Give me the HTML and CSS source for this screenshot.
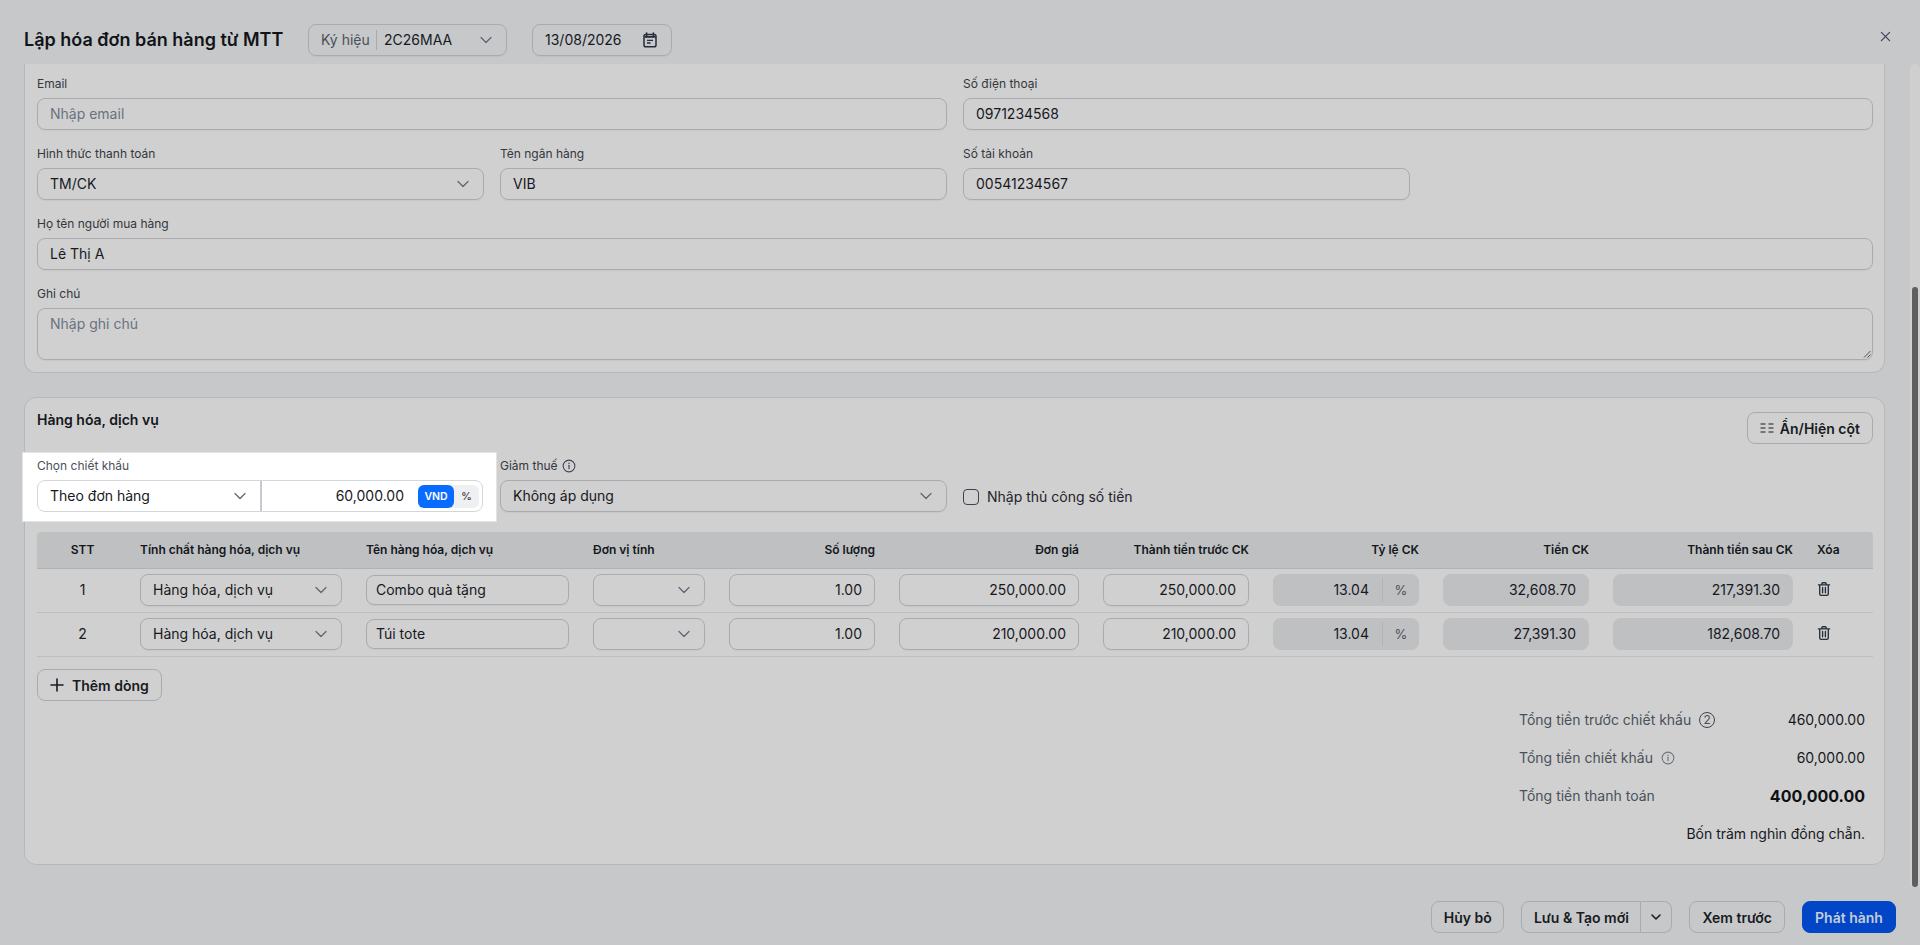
FILE: index.html
```html
<!DOCTYPE html>
<html lang="vi">
<head>
  <meta charset="UTF-8">
  <meta name="viewport" content="width=device-width, initial-scale=1.0">
  <title>Lập hóa đơn bán hàng từ MTT</title>
  <link rel="stylesheet" href="styles.css">
</head>
<body>
  <svg class="sprite" xmlns="http://www.w3.org/2000/svg">
    <symbol id="chev" viewBox="0 0 16 16"><path d="M3 5.5l5 5 5-5" fill="none" stroke="currentColor" stroke-width="1.2" stroke-linecap="round" stroke-linejoin="round"/></symbol>
    <symbol id="info" viewBox="0 0 16 16"><circle cx="8" cy="8" r="6.7" fill="none" stroke="currentColor" stroke-width="1.2"/><path d="M8 7.2v4" stroke="currentColor" stroke-width="1.3" stroke-linecap="round"/><circle cx="8" cy="4.9" r=".85" fill="currentColor"/></symbol>
    <symbol id="trash" viewBox="0 0 16 16"><path d="M3.7 4.2v8.6c0 .9.6 1.5 1.5 1.5h5.6c.9 0 1.5-.6 1.5-1.5V4.2M2.4 3.8h11.2M5.8 3.6V2.7c0-.6.4-1 1-1h2.4c.6 0 1 .4 1 1v.9M6.6 6.4v5.4M9.4 6.4v5.4" fill="none" stroke="currentColor" stroke-width="1.35" stroke-linecap="round"/></symbol>
  </svg>

  <header class="top">
    <h1>Lập hóa đơn bán hàng từ MTT</h1>
    <div class="box symbol-box">
      <span class="symbol-label">Ký hiệu</span>
      <span class="symbol-value">2C26MAA</span>
      <svg class="chev"><use href="#chev"/></svg>
    </div>
    <div class="box date-box">
      <span>13/08/2026</span>
      <svg class="cal" viewBox="0 0 16 16"><path d="M4.6 1v2.4M11.4 1v2.4" stroke="currentColor" stroke-width="1.6" stroke-linecap="round"/><rect x="2" y="2.4" width="12" height="12.4" rx="1.8" fill="none" stroke="currentColor" stroke-width="1.5"/><path d="M2.4 4h11.2v1.8H2.4z" fill="currentColor"/><path d="M5 8.3h6M5 11h3.6" stroke="currentColor" stroke-width="1.3"/></svg>
    </div>
    <button class="close" type="button" aria-label="Đóng">
      <svg viewBox="0 0 12 12"><path d="M1.5 1.5l9 9M10.5 1.5l-9 9" stroke="currentColor" stroke-width="1.3" stroke-linecap="round"/></svg>
    </button>
  </header>

  <div class="middle">
    <main class="content">
      <section class="card card-info">
        <div class="form-grid">
          <div class="field span-2"><label>Email</label><div class="box input placeholder">Nhập email</div></div>
          <div class="field span-2"><label>Số điện thoại</label><div class="box input">0971234568</div></div>
          <div class="field"><label>Hình thức thanh toán</label><div class="box input select">TM/CK<svg class="chev"><use href="#chev"/></svg></div></div>
          <div class="field"><label>Tên ngân hàng</label><div class="box input">VIB</div></div>
          <div class="field"><label>Số tài khoản</label><div class="box input">00541234567</div></div>
          <div class="field span-4"><label>Họ tên người mua hàng</label><div class="box input">Lê Thị A</div></div>
          <div class="field span-4"><label>Ghi chú</label>
            <div class="box textarea placeholder">Nhập ghi chú
              <svg class="grip" viewBox="0 0 8 8"><path d="M7.5 1L1 7.5M7.5 4.5L4.5 7.5" stroke="#4d4f53" stroke-width="1"/></svg>
            </div>
          </div>
        </div>
      </section>

      <section class="card card-goods">
        <div class="goods-head">
          <h2>Hàng hóa, dịch vụ</h2>
          <button class="btn" type="button">
            <svg class="icon-14" viewBox="0 0 14 14"><path d="M.5 3h5M.5 7h5M.5 11h5M8.5 3h5M8.5 7h5M8.5 11h5" stroke="currentColor" stroke-width="1.1"/></svg>
            Ẩn/Hiện cột
          </button>
        </div>

        <div class="discount-row">
          <div class="discount">
            <label>Chọn chiết khấu</label>
            <div class="discount-group">
              <div class="discount-select">Theo đơn hàng<svg class="chev"><use href="#chev"/></svg></div>
              <div class="discount-amount">60,000.00</div>
              <div class="unit-toggle"><span class="unit unit-on">VND</span><span class="unit">%</span></div>
            </div>
          </div>
          <div class="field tax">
            <label>Giảm thuế <svg class="icon-14 info-dark"><use href="#info"/></svg></label>
            <div class="box input select">Không áp dụng<svg class="chev"><use href="#chev"/></svg></div>
          </div>
          <label class="manual"><span class="checkbox"></span>Nhập thủ công số tiền</label>
        </div>

        <table class="lines">
          <colgroup>
            <col class="c-stt"><col class="c-kind"><col class="c-name"><col class="c-unit"><col class="c-qty"><col class="c-price">
            <col class="c-amount"><col class="c-rate"><col class="c-disc"><col class="c-after"><col class="c-del">
          </colgroup>
          <thead>
            <tr>
              <th class="center">STT</th>
              <th>Tính chất hàng hóa, dịch vụ</th>
              <th>Tên hàng hóa, dịch vụ</th>
              <th>Đơn vị tính</th>
              <th class="right">Số lượng</th>
              <th class="right">Đơn giá</th>
              <th class="right">Thành tiền trước CK</th>
              <th class="right">Tỷ lệ CK</th>
              <th class="right">Tiền CK</th>
              <th class="right">Thành tiền sau CK</th>
              <th>Xóa</th>
            </tr>
          </thead>
          <tbody>
            <tr>
              <td class="center">1</td>
              <td><div class="box input select">Hàng hóa, dịch vụ<svg class="chev"><use href="#chev"/></svg></div></td>
              <td><div class="box input slim">Combo quà tặng</div></td>
              <td><div class="box input select"><svg class="chev"><use href="#chev"/></svg></div></td>
              <td><div class="box input num">1.00</div></td>
              <td><div class="box input num">250,000.00</div></td>
              <td><div class="box input num">250,000.00</div></td>
              <td><div class="locked rate"><span class="rate-val">13.04</span><span class="rate-unit">%</span></div></td>
              <td><div class="locked num">32,608.70</div></td>
              <td><div class="locked num">217,391.30</div></td>
              <td><svg class="trash"><use href="#trash"/></svg></td>
            </tr>
            <tr>
              <td class="center">2</td>
              <td><div class="box input select">Hàng hóa, dịch vụ<svg class="chev"><use href="#chev"/></svg></div></td>
              <td><div class="box input slim">Túi tote</div></td>
              <td><div class="box input select"><svg class="chev"><use href="#chev"/></svg></div></td>
              <td><div class="box input num">1.00</div></td>
              <td><div class="box input num">210,000.00</div></td>
              <td><div class="box input num">210,000.00</div></td>
              <td><div class="locked rate"><span class="rate-val">13.04</span><span class="rate-unit">%</span></div></td>
              <td><div class="locked num">27,391.30</div></td>
              <td><div class="locked num">182,608.70</div></td>
              <td><svg class="trash"><use href="#trash"/></svg></td>
            </tr>
          </tbody>
        </table>

        <button class="btn add-line" type="button">
          <svg class="icon-14" viewBox="0 0 14 14"><path d="M7 1v12M1 7h12" stroke="currentColor" stroke-width="1.6" stroke-linecap="round"/></svg>
          Thêm dòng
        </button>

        <div class="summary">
          <div class="sum-row"><span class="sum-label">Tổng tiền trước chiết khấu <span class="count-badge">2</span></span><span>460,000.00</span></div>
          <div class="sum-row"><span class="sum-label">Tổng tiền chiết khấu <svg class="icon-14 info-light"><use href="#info"/></svg></span><span>60,000.00</span></div>
          <div class="sum-row"><span class="sum-label">Tổng tiền thanh toán</span><span class="sum-total">400,000.00</span></div>
          <div class="sum-row sum-words">Bốn trăm nghìn đồng chẵn.</div>
        </div>
      </section>
    </main>
    <div class="scroll-track"><div class="scroll-thumb"></div></div>
  </div>

  <footer class="actions">
    <button class="btn btn-cancel" type="button">Hủy bỏ</button>
    <div class="split">
      <button class="btn split-main" type="button">Lưu &amp; Tạo mới</button>
      <button class="btn split-more" type="button" aria-label="Thêm"><svg class="chev-small" viewBox="0 0 16 16"><path d="M4 6l4 4 4-4" fill="none" stroke="currentColor" stroke-width="1.6" stroke-linecap="round" stroke-linejoin="round"/></svg></button>
    </div>
    <button class="btn" type="button">Xem trước</button>
    <button class="btn btn-primary" type="button">Phát hành</button>
  </footer>
</body>
</html>
```

FILE: styles.css
```css
* {
  box-sizing: border-box;
}
html, body {
  height: 100%;
}
body {
  margin: 0;
  height: 945px;
  overflow: hidden;
  display: flex;
  flex-direction: column;
  background: #c7c8ca;
  color: #16191f;
  font-family: Inter, "Noto Sans", sans-serif;
  font-size: 14px;
  line-height: 20px;
}
.sprite {
  display: none;
}
h1, h2 {
  margin: 0;
}
button {
  font-family: inherit;
}

/* header */
.top {
  height: 64px;
  flex: none;
  display: flex;
  align-items: flex-start;
  padding: 24px 0 0 24px;
  position: relative;
}
.top h1 {
  font-size: 18px;
  font-weight: 600;
  line-height: 32px;
  width: 284px;
  white-space: nowrap;
  color: #111318;
}
.box {
  border: 1px solid #a9abb0;
  border-radius: 8px;
  box-shadow: 0 1px 1px rgba(0, 0, 0, .04);
}
.symbol-box {
  width: 199px;
  height: 32px;
  display: flex;
  align-items: center;
  padding: 0 12px;
}
.symbol-label {
  color: #4a505b;
  width: 56px;
  height: 20px;
  border-right: 1px solid #a9abb0;
}
.symbol-value {
  margin-left: 7px;
  flex: 1;
}
.date-box {
  margin-left: 25px;
  width: 140px;
  height: 32px;
  display: flex;
  align-items: center;
  justify-content: space-between;
  padding: 0 13px 0 12px;
}
.cal {
  width: 16px;
  height: 16px;
  color: #262e3b;
}
.close {
  position: absolute;
  top: 30px;
  left: 1880px;
  width: 10px;
  height: 12px;
  padding: 0;
  border: 0;
  background: none;
  color: #3a4352;
}
.close svg {
  display: block;
  width: 11px;
  height: 11px;
}
.chev {
  width: 16px;
  height: 16px;
  flex: none;
  color: #5d6470;
}

/* body of the dialog */
.middle {
  flex: 1;
  min-height: 0;
  display: flex;
  justify-content: space-between;
}
.content {
  width: 1861px;
  margin-left: 24px;
}
.card {
  background: #d0d0d0;
  border: 1px solid #b6b8bc;
  border-radius: 12px;
  padding: 12px 11px 12px 12px;
}
.card-info {
  border-top: 0;
  border-top-left-radius: 0;
  border-top-right-radius: 0;
}
.card-goods {
  margin-top: 24px;
  padding-top: 14px;
  padding-bottom: 11px;
}
.form-grid {
  display: grid;
  grid-template-columns: repeat(4, 1fr);
  gap: 16px;
}
.span-2 {
  grid-column: span 2;
}
.span-4 {
  grid-column: span 4;
}
label {
  display: block;
  font-size: 12px;
  line-height: 16px;
  color: #33373e;
  margin-bottom: 6px;
}
.input {
  height: 32px;
  padding: 0 12px;
  display: flex;
  align-items: center;
  white-space: nowrap;
}
.placeholder {
  color: #6a7280;
}
.select {
  justify-content: space-between;
}
.select .chev:only-child {
  margin-left: auto;
}
.textarea {
  height: 52px;
  padding: 5px 12px;
  position: relative;
}
.grip {
  position: absolute;
  right: 1px;
  bottom: 1px;
  width: 8px;
  height: 8px;
}

/* goods section */
.goods-head {
  display: flex;
  justify-content: space-between;
  align-items: flex-start;
  margin-bottom: 9px;
}
.goods-head h2 {
  font-size: 14px;
  font-weight: 600;
  line-height: 20px;
  margin-top: -2px;
  color: #14171c;
}
.btn {
  height: 32px;
  display: inline-flex;
  align-items: center;
  justify-content: center;
  gap: 6px;
  padding: 0 12px;
  border: 1px solid #a9abb0;
  border-radius: 8px;
  background: transparent;
  font-size: 14px;
  font-weight: 600;
  color: #181b22;
  white-space: nowrap;
}
.icon-14 {
  width: 14px;
  height: 14px;
  flex: none;
}
.discount-row {
  display: flex;
  align-items: flex-start;
  margin-bottom: 11px;
}
.discount {
  width: 473px;
  height: 68px;
  margin-left: -14px;
  padding: 5px 13px 0 14px;
  background: #fff;
  box-shadow: 0 0 0 1px #e2e3e5;
}
.discount label {
  margin-bottom: 6px;
  color: #4a505b;
}
.discount-group {
  height: 32px;
  display: flex;
  align-items: center;
  border: 1px solid #d3d6db;
  border-radius: 8px;
  padding-right: 3px;
  background: #fff;
}
.discount-select {
  width: 224px;
  height: 30px;
  flex: none;
  display: flex;
  align-items: center;
  justify-content: space-between;
  padding: 0 12px;
  border-right: 2px solid #c6c9ce;
}
.discount-amount {
  flex: 1;
  text-align: right;
  padding-right: 14px;
}
.unit-toggle {
  display: flex;
  height: 23px;
  width: 61px;
  background: #eff0f2;
  border-radius: 6px;
  font-size: 10.5px;
  font-weight: 600;
  line-height: 23px;
  color: #424853;
}
.unit {
  flex: 1;
  text-align: center;
}
.unit-on {
  flex: none;
  width: 36px;
  background: #0a6cff;
  color: #fff;
  border-radius: 6px;
}
.tax {
  width: 447px;
  margin-left: 4px;
  padding-top: 5px;
}
.tax label {
  display: flex;
  align-items: center;
  gap: 4px;
  margin-bottom: 6px;
}
.info-dark {
  color: #3d434e;
}
.info-light {
  color: #6f7580;
}
.manual {
  display: flex;
  align-items: center;
  gap: 8px;
  margin: 36px 0 0 16px;
  font-size: 14px;
  line-height: 16px;
  color: #1f232b;
}
.checkbox {
  width: 16px;
  height: 16px;
  border: 1px solid #3b4250;
  border-radius: 4px;
}

/* line items */
.lines {
  width: 1836px;
  table-layout: fixed;
  border-collapse: separate;
  border-spacing: 0;
}
.c-stt { width: 91px; }
.c-kind { width: 226px; }
.c-name { width: 227px; }
.c-unit { width: 136px; }
.c-qty { width: 170px; }
.c-price { width: 204px; }
.c-amount { width: 170px; }
.c-rate { width: 170px; }
.c-disc { width: 170px; }
.c-after { width: 204px; }
.c-del { width: 68px; }
.lines th {
  height: 37px;
  padding: 0 12px;
  background: #bec0c2;
  border-bottom: 1px solid #b0b2b6;
  font-size: 12px;
  font-weight: 600;
  text-align: left;
  color: #14171c;
  white-space: nowrap;
}
.lines th:first-child {
  border-top-left-radius: 4px;
}
.lines th:last-child {
  border-top-right-radius: 4px;
}
.lines td {
  padding: 5px 12px 6px;
  border-bottom: 1px solid #bcbec1;
}
.lines .center {
  text-align: center;
}
.lines .right {
  text-align: right;
}
.slim {
  height: 30px;
  margin: 1px 0;
  padding: 0 9px;
}
.num {
  justify-content: flex-end;
}
.locked {
  height: 32px;
  display: flex;
  align-items: center;
  padding: 0 13px;
  border-radius: 8px;
  background: #bfc0c2;
}
.rate {
  padding: 0;
}
.rate-val {
  flex: 1;
  text-align: right;
  padding-right: 13px;
  height: 24px;
  line-height: 24px;
  border-right: 1px solid #b2b3b6;
}
.rate-unit {
  width: 36px;
  text-align: center;
  color: #4a505b;
  font-size: 13px;
}
.trash {
  display: block;
  width: 16px;
  height: 16px;
  margin: -2px 0 0 -1px;
  color: #262e3b;
}
.add-line {
  margin-top: 12px;
  gap: 8px;
}

/* totals */
.summary {
  margin: 0 8px 0 auto;
  width: 346px;
}
.sum-row {
  height: 38px;
  display: flex;
  align-items: center;
  justify-content: space-between;
}
.sum-label {
  display: flex;
  align-items: center;
  gap: 8px;
  color: #4a505b;
}
.count-badge {
  width: 16px;
  height: 16px;
  border: 1px solid #3d434e;
  border-radius: 50%;
  font-size: 12px;
  line-height: 14px;
  text-align: center;
}
.sum-total {
  font-size: 16px;
  font-weight: 700;
  color: #0e1014;
}
.sum-words {
  justify-content: flex-end;
}

/* fake scrollbar */
.scroll-track {
  width: 10px;
  background: #cfcfcf;
  border-radius: 5px 5px 0 0;
  padding: 223px 2px 0;
}
.scroll-thumb {
  height: 600px;
  background: #5e5e5e;
  border-radius: 3px;
}

/* footer */
.actions {
  flex: none;
  height: 58px;
  display: flex;
  justify-content: flex-end;
  gap: 17px;
  padding: 14px 24px 0 0;
}
.btn-cancel {
  width: 73px;
  padding: 0;
}
.split {
  display: flex;
}
.split-main {
  width: 120px;
  border-radius: 8px 0 0 8px;
}
.split-more {
  width: 31px;
  padding: 0;
  border-left: 0;
  border-radius: 0 8px 8px 0;
}
.chev-small {
  width: 16px;
  height: 16px;
}
.btn-primary {
  width: 94px;
  background: #0046c7;
  border-color: #0046c7;
  color: #c5ccd9;
}
```
